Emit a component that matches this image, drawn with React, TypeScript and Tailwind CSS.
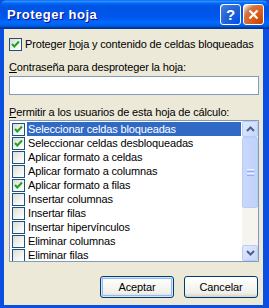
import React from "react";

interface Permiso {
  label: string;
  checked: boolean;
}

const permisos: Permiso[] = [
  { label: "Seleccionar celdas bloqueadas", checked: true },
  { label: "Seleccionar celdas desbloqueadas", checked: true },
  { label: "Aplicar formato a celdas", checked: false },
  { label: "Aplicar formato a columnas", checked: false },
  { label: "Aplicar formato a filas", checked: true },
  { label: "Insertar columnas", checked: false },
  { label: "Insertar filas", checked: false },
  { label: "Insertar hipervínculos", checked: false },
  { label: "Eliminar columnas", checked: false },
  { label: "Eliminar filas", checked: false },
];

function Check({ checked }: { checked: boolean }) {
  return (
    <div className="w-[13px] h-[13px] shrink-0 border border-[#1C5180] bg-[linear-gradient(135deg,#DCDCD7_0%,#F4F4F0_60%,#FFFFFF_100%)] flex items-center justify-center">
      {checked && (
        <svg width="11" height="11" viewBox="0 0 11 11">
          <path d="M2 5 L4.3 7.5 L9 2.5" fill="none" stroke="#21A121" strokeWidth="2" />
        </svg>
      )}
    </div>
  );
}

function ScrollArrow({ up }: { up: boolean }) {
  return (
    <div className="w-[16px] h-[16px] rounded-[2px] border border-[#B8CCF7] bg-[linear-gradient(135deg,#E0EAFE_0%,#C6D5FB_100%)] flex items-center justify-center">
      <svg width="9" height="6" viewBox="0 0 9 6">
        <path d={up ? "M1 5 L4.5 1.5 L8 5" : "M1 1 L4.5 4.5 L8 1"} fill="none" stroke="#4D6185" strokeWidth="2" />
      </svg>
    </div>
  );
}

export default function App() {
  return (
    <div className="w-[269px] h-[308px] flex flex-col bg-[#0A4FE0] font-['Liberation_Sans',Arial,sans-serif] text-[11px] tracking-[-0.15px] text-black select-none">
      {/* barra de título */}
      <div className="h-[29px] shrink-0 flex items-center pl-[7px] pr-[5px] rounded-t-[7px] bg-[linear-gradient(180deg,#0058EE_0%,#3593FF_4%,#288EFF_6%,#127DFF_8%,#036FFC_10%,#0262EE_14%,#0057E5_20%,#0054E3_24%,#0055EB_56%,#005BF5_66%,#026AFE_76%,#0062EF_86%,#0052D6_92%,#0040AB_94%,#003092_100%)]">
        <span className="flex-1 text-white font-bold text-[13px] tracking-[0.5px] [text-shadow:1px_1px_#0F1089]">
          Proteger hoja
        </span>
        <div className="flex gap-[2px]">
          <div className="w-[21px] h-[21px] rounded-[3px] border border-white bg-[radial-gradient(circle_at_90%_90%,#0054E9_0%,#2263D5_55%,#4479E4_90%,#FFFFFF_100%)] flex items-center justify-center text-white font-bold text-[15px] leading-none">
            ?
          </div>
          <div className="w-[21px] h-[21px] rounded-[3px] border border-white bg-[radial-gradient(circle_at_90%_90%,#CC4600_0%,#DC6527_55%,#CD7546_70%,#FFFFFF_100%)] flex items-center justify-center">
            <svg width="11" height="11" viewBox="0 0 11 11">
              <path d="M1.5 1.5 L9.5 9.5 M9.5 1.5 L1.5 9.5" stroke="white" strokeWidth="2.2" />
            </svg>
          </div>
        </div>
      </div>

      {/* cuerpo */}
      <div className="flex-1 ml-[4px] mr-[6px] mb-[3px] bg-[#ECE9D8] flex flex-col pl-[5px] pr-[4px] pt-[9px]">
        <div className="flex items-center gap-[3px] h-[13px]">
          <Check checked />
          <span className="leading-[13px] whitespace-nowrap">
            Proteger <u>h</u>oja y contenido de celdas bloqueadas
          </span>
        </div>

        <div className="mt-[10px] leading-[13px] whitespace-nowrap">
          <u>C</u>ontraseña para desproteger la hoja:
        </div>
        <div className="mt-[2px] h-[19px] border border-[#7F9DB9] bg-white" />

        <div className="mt-[11px] leading-[13px] whitespace-nowrap">
          <u>P</u>ermitir a los usuarios de esta hoja de cálculo:
        </div>

        <div className="mt-[1px] h-[142px] border border-[#7F9DB9] bg-white flex overflow-hidden">
          <div className="flex-1 pt-[1px] pl-[2px] flex flex-col overflow-hidden">
            {permisos.map((p, i) => (
              <div key={p.label} className="h-[14px] shrink-0 flex items-center">
                <Check checked={p.checked} />
                <span
                  className={
                    "ml-[2px] pl-[1px] pr-[2px] flex-1 h-[14px] leading-[14px] whitespace-nowrap " +
                    (i === 0 ? "bg-[#316AC5] text-white" : "")
                  }
                >
                  {p.label}
                </span>
              </div>
            ))}
          </div>
          <div className="w-[16px] ml-[1px] bg-[#F5F4EE] flex flex-col">
            <ScrollArrow up />
            <div className="h-[71px] rounded-[2px] border border-[#B8CCF7] bg-[linear-gradient(90deg,#C9D8FC_0%,#BFD2FB_100%)] flex flex-col items-center justify-center gap-[1px]">
              <div className="w-[7px] h-[1px] bg-[#EEF4FE]" />
              <div className="w-[7px] h-[1px] bg-[#8CB0F8]" />
              <div className="w-[7px] h-[1px] bg-[#EEF4FE]" />
              <div className="w-[7px] h-[1px] bg-[#8CB0F8]" />
            </div>
            <div className="flex-1" />
            <ScrollArrow up={false} />
          </div>
        </div>

        <div className="mt-[14px] flex justify-end gap-[10px] pr-[1px]">
          <button className="w-[74px] h-[22px] rounded-[3px] border border-[#003C74] bg-[linear-gradient(180deg,#FFFFFF_0%,#F0F0EA_80%,#D6D0C5_100%)] shadow-[inset_0_0_0_1px_#CEE7FF,inset_0_0_0_2px_#98B8EA] leading-none">
            Aceptar
          </button>
          <button className="w-[74px] h-[22px] rounded-[3px] border border-[#003C74] bg-[linear-gradient(180deg,#FFFFFF_0%,#F0F0EA_80%,#D6D0C5_100%)] leading-none">
            Cancelar
          </button>
        </div>
      </div>
    </div>
  );
}
